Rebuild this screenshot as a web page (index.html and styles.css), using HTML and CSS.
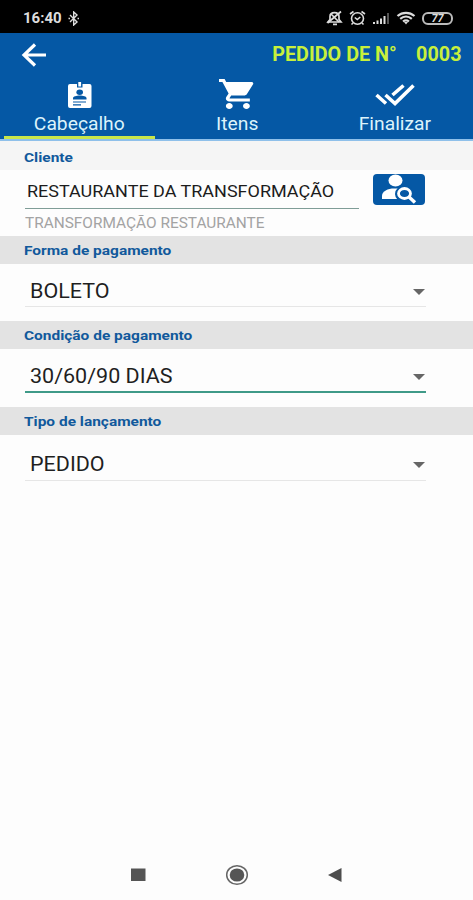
FILE: index.html
```html
<!DOCTYPE html>
<html lang="pt-BR">
<head>
    <meta charset="UTF-8">
    <meta name="viewport" content="width=device-width, initial-scale=1.0">
    <title>Pedido</title>
    <link rel="stylesheet" href="styles.css">
</head>
<body>
    <div class="status-bar">
        <div class="status-left">
            <span class="clock">16:40</span>
            <svg width="12" height="15" viewBox="0 0 12 15" fill="none" stroke="#ddd" stroke-width="1.400">
                <path d="M2 4l7 7-3.300 3V1l3.300 3-7 7"/>
                <path d="M.500 7.500h1.500M9.500 7.500H11" stroke-width="1.600"/>
            </svg>
        </div>
        <div class="status-right">
            <svg width="17" height="16" viewBox="0 0 17 16" fill="none" stroke="#ddd" stroke-width="1.700">
                <path d="M2 12h13l-2-2.500V6.500C13 4 11 2.700 8.500 2.700S4 4 4 6.500v3z"/>
                <path d="M7 14.300h4M15 1.500L1.500 13M5 4l8 8"/>
            </svg>
            <svg width="17" height="16" viewBox="0 0 17 16" fill="none" stroke="#ddd" stroke-width="1.600">
                <ellipse cx="8.500" cy="8.500" rx="6" ry="5.700"/>
                <path d="M1 4l3.500-2.500M16 4l-3.500-2.500M5.800 7.500l2.500 2 3-2.500M4 13l-1.500 1.500M13 13l1.500 1.500"/>
            </svg>
            <svg width="18" height="14" viewBox="0 0 18 14" fill="#ddd">
                <path d="M1 11h2v2H1zM4.500 9.500h2V13h-2zM8 7.500h2V13H8zM11.500 5h2v8h-2z"/>
                <path d="M15 2h2v11h-2z" fill="#555"/>
            </svg>
            <svg width="20" height="14" viewBox="0 0 20 14" fill="none" stroke="#ddd" stroke-width="2.200">
                <path d="M1.500 5c5-4.300 12-4.300 17 0M4.200 7.800c3.500-3 8.100-3 11.600 0M7 10.500c2-1.600 4-1.600 6 0"/>
                <path d="M8 11h4l-2 2.500z" fill="#ddd" stroke="none"/>
            </svg>
            <div class="battery">77</div>
        </div>
    </div>

    <header class="header">
        <div class="toolbar">
            <svg width="26" height="24" viewBox="0 0 26 24" fill="none" stroke="#fff" stroke-width="3.200">
                <path d="M25 12H3M14 1.500L3 12l11 10.500"/>
            </svg>
            <h1 class="order"><span class="order-text">PEDIDO DE N°</span><span class="order-number">0003</span></h1>
        </div>
        <nav class="tabs">
            <a class="tab active">
                <svg width="26" height="28" viewBox="0 0 26 28">
                    <path fill="#fff" d="M3 3h7v3.500h5.500V3h7q2 0 2 2v20q0 2-2 2H3q-2 0-2-2V5q0-2 2-2z"/>
                    <path fill="#fff" d="M11.300 1h2.800v4.500h-2.800z"/>
                    <ellipse cx="12.700" cy="11.200" rx="3.300" ry="2.700" fill="#0558a5"/>
                    <path fill="#0558a5" d="M6 18.500v-1.200c0-3.600 13.500-3.600 13.500 0v1.200z"/>
                    <path stroke="#0558a5" stroke-width="1.200" d="M6 21h13M6 23.800h8"/>
                </svg>
                <span class="tab-label">Cabeçalho</span>
            </a>
            <a class="tab">
                <svg width="36" height="30" viewBox="1 2 21 20" preserveAspectRatio="none" fill="#fff">
                    <path d="M7 18c-1.100 0-1.990.9-1.990 2S5.900 22 7 22s2-.9 2-2-.9-2-2-2zM1 2v2h2l3.600 7.590-1.350 2.450c-.16.28-.25.61-.25.96 0 1.100.9 2 2 2h12v-2H7.420c-.14 0-.25-.11-.25-.25l.03-.12.900-1.630h7.450c.75 0 1.410-.41 1.750-1.030l3.580-6.490c.08-.14.12-.31.12-.48 0-.55-.45-1-1-1H5.210l-.94-2H1zm16 16c-1.100 0-1.990.9-1.990 2s.89 2 1.990 2 2-.9 2-2-.9-2-2-2z"/>
                </svg>
                <span class="tab-label">Itens</span>
            </a>
            <a class="tab">
                <svg width="40" height="26" viewBox="0 0 40 26" fill="none" stroke="#fff" stroke-width="3.600">
                    <path d="M1.500 12l9.500 8.500M10.500 12l9.500 8.500L38.500 2.500M17.500 12L28.500 2.500"/>
                </svg>
                <span class="tab-label">Finalizar</span>
            </a>
        </nav>
    </header>

    <main>
        <h2 class="section-title light"><span>Cliente</span></h2>
        <div class="client">
            <div class="client-field">
                <div class="client-name"><span>RESTAURANTE DA TRANSFORMAÇÃO</span></div>
                <div class="client-hint"><span>TRANSFORMAÇÃO RESTAURANTE</span></div>
            </div>
            <button class="search-btn">
                <svg width="36" height="30" viewBox="0 0 36 30">
                    <ellipse cx="14.500" cy="6.500" rx="7" ry="6" fill="#fff"/>
                    <path d="M1 25v-3c0-5 6-7.500 12-7.500h5V25z" fill="#fff"/>
                    <ellipse cx="23.500" cy="20" rx="9.500" ry="8.500" fill="#0558a5"/>
                    <ellipse cx="23.500" cy="19.500" rx="6" ry="5" fill="none" stroke="#fff" stroke-width="2.800"/>
                    <path d="M28 23l6 5.500" stroke="#fff" stroke-width="3.400"/>
                </svg>
            </button>
        </div>

        <h2 class="section-title"><span>Forma de pagamento</span></h2>
        <div class="select payment">
            <span class="value">BOLETO</span>
            <span class="caret"></span>
        </div>

        <h2 class="section-title"><span>Condição de pagamento</span></h2>
        <div class="select terms focused">
            <span class="value">30/60/90 DIAS</span>
            <span class="caret"></span>
        </div>

        <h2 class="section-title"><span>Tipo de lançamento</span></h2>
        <div class="select kind">
            <span class="value">PEDIDO</span>
            <span class="caret"></span>
        </div>
    </main>

    <footer class="nav-bar">
        <svg width="15" height="14" viewBox="0 0 15 14"><path fill="#555" d="M0 .500h14.500V13H0z"/></svg>
        <svg width="24" height="22" viewBox="0 0 24 22">
            <ellipse cx="12" cy="11" rx="10.300" ry="9.300" fill="none" stroke="#666" stroke-width="1.500"/>
            <ellipse cx="12" cy="11" rx="7.300" ry="6.600" fill="#555"/>
        </svg>
        <svg width="15" height="15" viewBox="0 0 15 15"><path fill="#4d4d4d" d="M0 7L13.500 0v14z"/></svg>
    </footer>
</body>
</html>
```

FILE: styles.css
```css
* {
    margin: 0;
    padding: 0;
    box-sizing: border-box;
}

body {
    font-family: Roboto, "Liberation Sans", sans-serif;
    background: #fdfdfd;
    height: 100vh;
    display: flex;
    flex-direction: column;
    overflow: hidden;
}

svg {
    display: block;
}

.status-bar {
    height: 33px;
    background: #000;
    color: #ddd;
    display: flex;
    align-items: center;
    justify-content: space-between;
    padding: 3px 20px 0 23px;
}

.status-left,
.status-right {
    display: flex;
    align-items: center;
    gap: 6px;
}

.clock {
    font-size: 15px;
    font-weight: bold;
}

.battery {
    width: 31px;
    height: 13px;
    border: 2px solid #bbb;
    border-radius: 6px;
    font-size: 11px;
    line-height: 9px;
    font-weight: bold;
    font-style: italic;
    text-align: center;
}

.header {
    height: 108px;
    background: #0558a5;
    border-bottom: 2px solid #8fc0ea;
    display: flex;
    flex-direction: column;
}

.toolbar {
    height: 43px;
    display: flex;
    align-items: center;
    justify-content: space-between;
    padding: 0 12px 0 21px;
}

.order {
    display: flex;
    gap: 19px;
    color: #c8f03c;
    font-size: 19.500px;
    line-height: 24px;
    font-weight: bold;
    transform: scaleX(1.015);
    transform-origin: right;
}

.tabs {
    flex: 1;
    display: grid;
    grid-template-columns: 151px 1fr 151px;
    padding: 0 3px 0 4px;
}

.tab {
    display: flex;
    flex-direction: column;
    align-items: center;
    justify-content: flex-end;
    color: #dcf3fb;
    border-bottom: 3px solid transparent;
}

.tab.active {
    border-bottom-color: #c8e64b;
}

.tab-label {
    font-size: 17.500px;
    line-height: 22px;
    margin: 4px 0 1px;
    transform: scaleX(1.1);
}

.section-title {
    height: 28px;
    background: #e3e3e3;
    color: #11599c;
    font-size: 13.500px;
    line-height: 29px;
    font-weight: bold;
    padding-left: 24px;
}

.section-title span,
.client-name span,
.client-hint span,
.value {
    display: inline-block;
    transform-origin: left;
}

.section-title span {
    transform: scaleX(1.145);
}

.section-title.light {
    height: 29px;
    background: #f5f5f5;
    line-height: 32px;
}

.client {
    height: 66px;
    display: flex;
    gap: 14px;
    padding: 4px 0 0 25px;
}

.client-field {
    width: 334px;
}

.client-name {
    height: 35px;
    border-bottom: 1px solid #7f9d97;
    padding-left: 2px;
    color: #1c1c1c;
    font-size: 16.500px;
    line-height: 36px;
    white-space: nowrap;
}

.client-name span {
    transform: scaleX(1.09);
}

.client-hint {
    color: #a3a3a3;
    font-size: 14px;
    line-height: 28px;
    white-space: nowrap;
}

.client-hint span {
    transform: scaleX(1.1);
}

.search-btn {
    width: 52px;
    height: 31px;
    border: none;
    border-radius: 4px;
    background: #0558a5;
    display: flex;
    justify-content: center;
}

.select {
    margin: 0 47px 0 25px;
    padding: 0 1px 0 5px;
    display: flex;
    align-items: center;
    justify-content: space-between;
    border-bottom: 1px solid #e6e6e6;
    color: #1f1f1f;
    font-size: 20px;
}

.value {
    transform: scaleX(1.075);
}

.payment {
    height: 43px;
    padding-top: 11px;
    margin-bottom: 14px;
}

.terms {
    height: 44px;
    padding-top: 11px;
    margin-bottom: 14px;
}

.kind {
    height: 46px;
    padding-top: 12px;
}

.select.focused {
    border-bottom: 2px solid #3f9a88;
}

.caret {
    border: 6px solid transparent;
    border-top: 6px solid #666;
    border-bottom: none;
    margin-top: 3px;
}

.nav-bar {
    margin-top: auto;
    height: 50px;
    display: flex;
    align-items: center;
    justify-content: center;
    gap: 79px;
}
```
